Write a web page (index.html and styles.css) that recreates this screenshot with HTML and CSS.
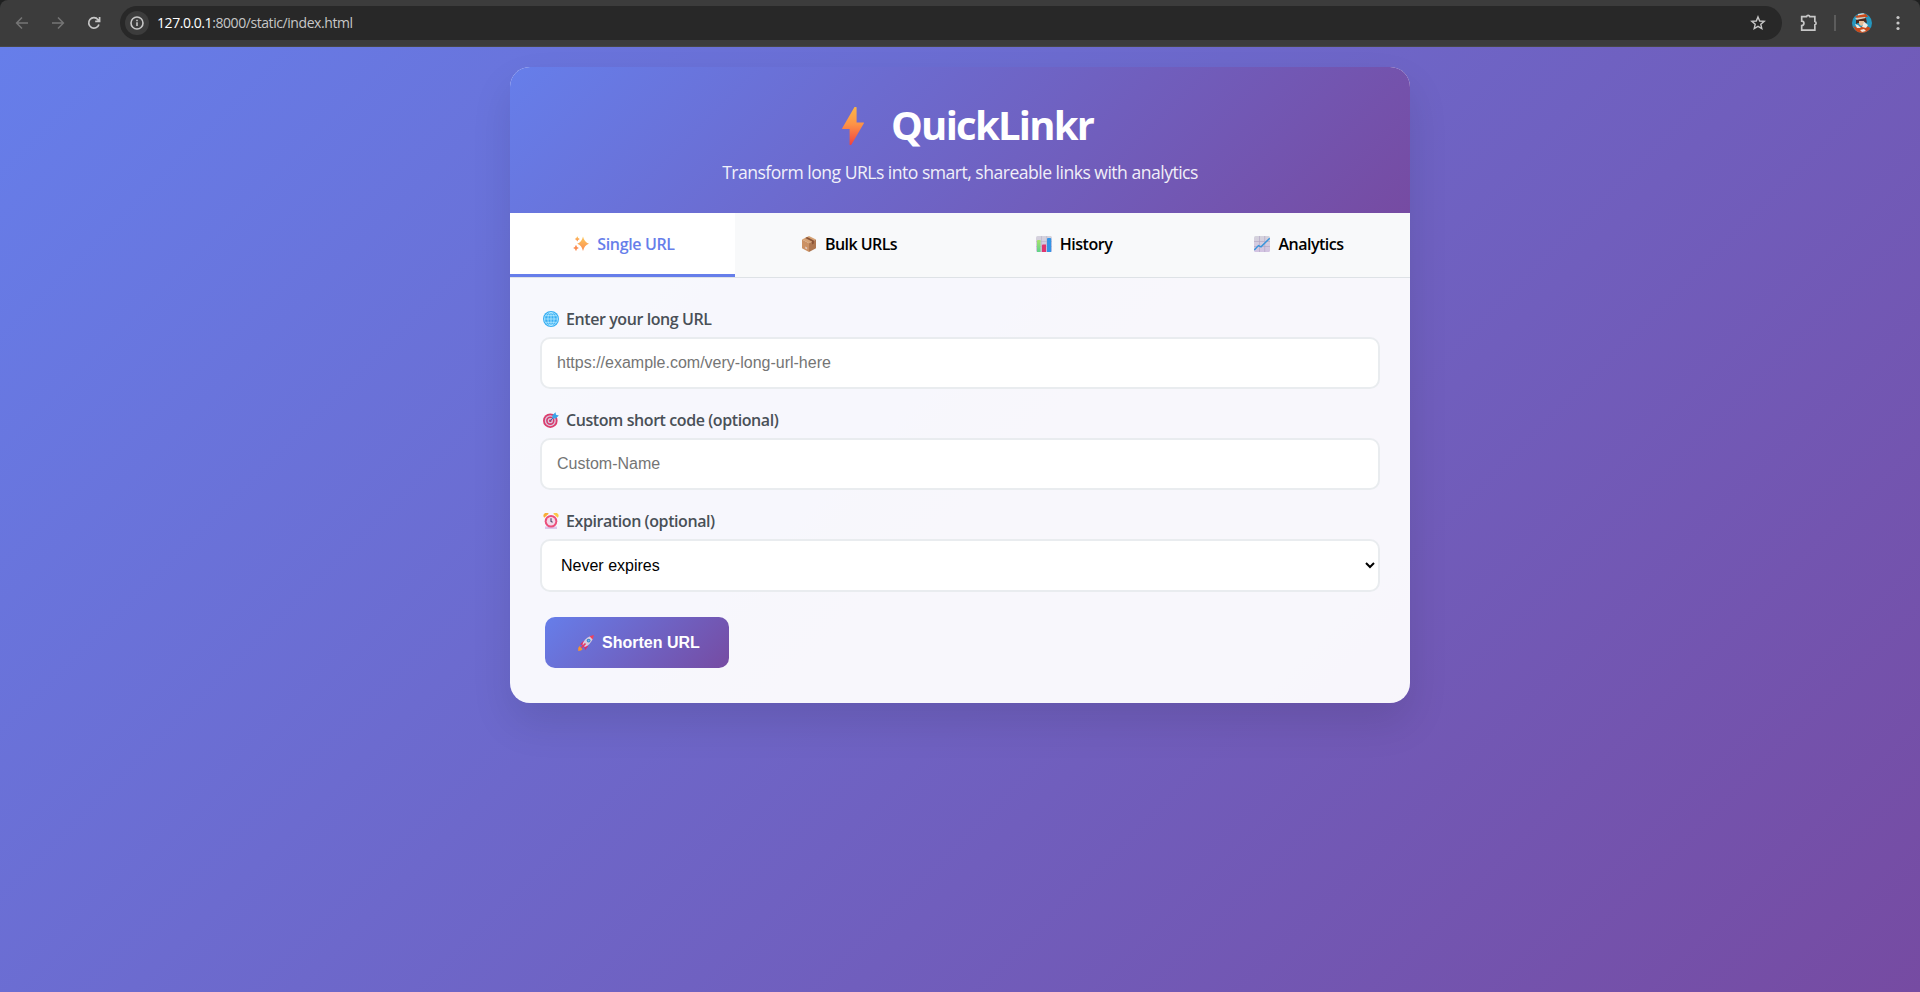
FILE: index.html
```html
<!DOCTYPE html>
<html lang="en">
<head>
<meta charset="utf-8">
<title>QuickLinkr</title>
<link rel="stylesheet" href="styles.css">
</head>
<body>
<svg width="0" height="0" class="defs" aria-hidden="true">
  <defs>
    <linearGradient id="bolt" x1="0" y1="0" x2="0" y2="1"><stop offset="0" stop-color="#fbb547"/><stop offset=".45" stop-color="#fd9347"/><stop offset="1" stop-color="#f1423f"/></linearGradient>
    <linearGradient id="spark" x1="0" y1="0" x2="0" y2="1"><stop offset="0" stop-color="#fcc95c"/><stop offset="1" stop-color="#fb8d52"/></linearGradient>
    <linearGradient id="green" x1="0" y1="0" x2="0" y2="1"><stop offset="0" stop-color="#a7e36b"/><stop offset="1" stop-color="#5fd389"/></linearGradient>
    <linearGradient id="pane" x1="0" y1="0" x2="0" y2="1"><stop offset="0" stop-color="#d5d3dc"/><stop offset="1" stop-color="#d3c3e2"/></linearGradient>
  </defs>
</svg>
<header class="browser">
  <div class="toolbar">
    <svg class="nav dim" viewBox="0 0 16 16"><path d="M14 8H3M8 2.5 2.6 8 8 13.5"/></svg>
    <svg class="nav dim" viewBox="0 0 16 16"><path d="M2 8h11M8 2.5 13.4 8 8 13.5"/></svg>
    <svg class="nav" viewBox="0 0 16 16"><path d="M12.9 9.4A5.2 5.2 0 1 1 12 4.7L13.6 6.3M13.6 2v4.4H9.2"/></svg>
    <div class="address">
      <span class="info"><svg viewBox="0 0 16 16"><circle cx="8" cy="8" r="6"/><path d="M8 7.3v3.8M8 4.7v1.5"/></svg></span>
      <span class="url"><b>127.0.0.1</b>:8000/static/index.html</span>
      <svg class="star" viewBox="0 0 16 16"><path d="m8 1.9 1.7 4.1 4.5.4-3.4 2.9 1 4.3L8 11.300l-3.800 2.300 1-4.300L1.800 6.400l4.500-.4z"/></svg>
    </div>
    <svg class="ext" viewBox="1 1 16 16"><path d="M2.500 3.300h4.300a1.500 1.500 0 0 1 2.900 0h4.500v4.400a1.500 1.500 0 0 1 0 2.900v4.700H2.500v-4a2 2 0 0 0 0-4z"/></svg>
    <span class="divider"></span>
    <svg class="avatar" viewBox="0 0 20 20"><clipPath id="round"><circle cx="10" cy="10" r="10"/></clipPath><g clip-path="url(#round)"><path fill="#2597bf" d="M0 0h20v20H0z"/><path fill="#e3dad0" d="M6 1 12 0l1 2-7 1z"/><path fill="#c94a1b" d="M3 3 14 1l2 3-11 1z"/><path fill="#d9cfc2" d="M3 5 13 4l1 2-9 1z"/><path fill="#4b2a1f" d="m4 7 10-2 1 5-3-1-6 1-2 1z"/><path fill="#e5bd97" d="m7 8 5 0 1 3-4 2-2-2z"/><path fill="#c94a1b" d="M1 13l5 2 6-2 5 1 2 2-5 4H5z"/><path fill="#f1e8df" d="m3 11 3 1 3 3-4 0zM12 9l4 3-2 3-4-1zM8 17l4-1 2 2-4 1z"/></g></svg>
    <svg class="more" viewBox="0 0 4 16"><circle cx="2" cy="2.500" r="1.600"/><circle cx="2" cy="8" r="1.600"/><circle cx="2" cy="13.500" r="1.600"/></svg>
  </div>
</header>
<main class="page">
  <section class="card">
    <div class="hero">
      <h1><svg class="bolt" viewBox="0 0 22 38"><path fill="url(#bolt)" d="M12.500 0H14a.6.6 0 0 1 .6.600V15.500h6.900a.5.5 0 0 1 .4.800L9.500 37.500a.8.800 0 0 1-.7.500H7.600V22H.7a.5.500 0 0 1-.5-.8z"/></svg><span>QuickLinkr</span></h1>
      <p>Transform long URLs into smart, shareable links with analytics</p>
    </div>
    <nav class="tabs">
      <button class="tab active"><svg class="emoji" viewBox="0 0 16 16"><g fill="url(#spark)"><path d="M10 .4q1.300 5.800 6 7.300-4.700 1.500-6 7.200-1.300-5.700-5.800-7.200Q8.700 6.200 10 .4z"/><path d="M4.300.2Q4.800 2.500 6.800 3 4.800 3.500 4.300 5.600 3.700 3.500 1.800 3 3.700 2.500 4.300.2z"/><path fill="#fb8d52" d="M3 8.800q.5 2.600 2.900 3.200Q3.500 12.600 3 15.200 2.400 12.600.1 12 2.400 11.400 3 8.800z"/></g></svg><span class="t1">Single URL</span></button>
      <button class="tab"><svg class="emoji" viewBox="0 0 16 16"><path fill="#d6a274" d="M8 0l7 3.400-7 3.800L1 3.400z"/><path fill="#cb9163" d="M1 3.400l7 3.800V16l-7-3.700z"/><path fill="#ad7650" d="M15 3.400 8 7.200V16l7-3.700z"/><path fill="#8a5437" d="m4.200 1.900 1.900-1 6.800 3.600v3L11 8.500V5.600z"/><path fill="#e0c7bb" d="m4.200 10.500 2 1v2l-2-1z"/></svg><span class="t2">Bulk URLs</span></button>
      <button class="tab"><svg class="emoji" viewBox="0 0 16 16"><rect width="16" height="16" rx="1.500" fill="url(#pane)"/><path d="M0 5.500h16M0 10.500h16M5.500 0v16M10.700 0v16" stroke="#b9b3c9" stroke-width=".6"/><path fill="url(#green)" d="M1 5a1 1 0 0 1 1-1h2.500v12H1z"/><path fill="#df3670" d="M6 9.500a1 1 0 0 1 1-1h3V16H6z"/><path fill="#3494e6" d="M11 3a1 1 0 0 1 1-1h2.200a1 1 0 0 1 1 1v13H11z"/></svg><span class="t3">History</span></button>
      <button class="tab"><svg class="emoji" viewBox="0 0 16 16"><rect width="16" height="16" rx="1.500" fill="url(#pane)"/><path d="M0 5.500h16M0 10.500h16M5.500 0v16M10.700 0v16" stroke="#b5a9c6" stroke-width=".7"/><path fill="none" stroke="#3895dc" stroke-width="1.400" d="m.3 14 4.200-4.400 2.500 1.200L15.700 2.200"/></svg><span class="t4">Analytics</span></button>
    </nav>
    <form class="form">
      <div class="group">
        <label for="long"><svg class="emoji" viewBox="0 0 16 16"><circle cx="8" cy="8" r="8" fill="#38aef2"/><g fill="none" stroke="#b5eaff" stroke-width=".8"><circle cx="8" cy="8" r="6.500"/><ellipse cx="8" cy="8" rx="3.100" ry="6.500"/><path d="M8 1.500v13M1.500 8h13M2.500 4.700h11M2.500 11.300h11"/></g></svg><span>Enter your long URL</span></label>
        <input id="long" type="text" placeholder="https://example.com/very-long-url-here">
      </div>
      <div class="group">
        <label for="code"><svg class="emoji" viewBox="0 0 16 16"><circle cx="7.300" cy="8.700" r="7.300" fill="#dc3d6d"/><circle cx="7.300" cy="8.700" r="5.500" fill="#d9c8de"/><circle cx="7.300" cy="8.700" r="4.200" fill="#d8396d"/><circle cx="7.300" cy="8.700" r="2.600" fill="#d9c8de"/><circle cx="7.300" cy="8.700" r="1.300" fill="#c63065"/><path stroke="#3b6ea8" d="m7.500 8.500 4-4"/><path fill="#3aa4e8" d="m9.500 6.600-.3-3L12.500.2l.5 2.600 2.900.6L12.600 6.600z"/></svg><span>Custom short code (optional)</span></label>
        <input id="code" type="text" placeholder="Custom-Name">
      </div>
      <div class="group">
        <label for="exp"><svg class="emoji" viewBox="0 0 16 16"><path fill="#ddc5ea" d="M2 13.500h12v2.400H2z"/><path fill="#f8ad37" d="M1.300 4.700A2.700 2.700 0 0 1 5.700.7z"/><path fill="#fbc747" d="M14.700 4.700A2.700 2.700 0 0 0 10.300.7z"/><circle cx="8" cy="8.200" r="6.300" fill="#ec4e7b"/><circle cx="8" cy="8.200" r="4.300" fill="#f1d9ea"/><path fill="none" stroke="#4c3f67" stroke-width="1.100" d="M8 5.200v3.300l1.600.8"/></svg><span>Expiration (optional)</span></label>
        <select id="exp"><option>Never expires</option></select>
      </div>
      <button type="button" class="submit"><svg class="emoji" viewBox="0 0 16 16"><path fill="#f59131" d="M1.500 11 4.500 14.300 3 15.600.2 15.900V13z"/><path fill="#dd2f68" d="M2 9.200 5.500 6l2.700.5L10 8l.2 3-3 4.200-1-3.200L4 10z"/><path fill="#d6cbe0" d="M4.500 9.500Q6 3.600 12.600 1l2.400 2.400Q12.500 9.500 6.800 12z"/><path fill="#f0405c" d="m11.500 1.300 4.400-1.200-1.200 4.400z"/><circle cx="10.600" cy="5.600" r="1.900" fill="#3a87c8"/><circle cx="10.600" cy="5.600" r=".9" fill="#69baf0"/><path stroke="#e83963" stroke-width="1.700" d="m3.500 12.700 4-4.200"/></svg><span>Shorten URL</span></button>
    </form>
  </section>
</main>
</body>
</html>
```
FILE: styles.css
```css
* { box-sizing: border-box; }
body {
  margin: 0;
  height: 992px;
  display: flex;
  flex-direction: column;
  overflow: hidden;
  font-family: "Open Sans", "Noto Sans", sans-serif;
}
.defs { position: absolute; }
.browser { height: 47px; background: #1f2020; flex: none; }
.toolbar {
  height: 47px;
  display: flex;
  align-items: center;
  padding: 0 20px 1px 14px;
  background: #3c3c3c;
  border-bottom: 1px solid #474747;
  border-radius: 8px 8px 0 0;
}
.nav {
  width: 16px; height: 16px; margin-right: 20px;
  fill: none; stroke: #c7c7c7; stroke-width: 1.7;
}
.nav.dim { stroke: #757575; stroke-width: 1.5; }
.address {
  width: 1662px; height: 34px;
  margin-left: -2px;
  padding: 0 16px 0 5px;
  display: flex;
  align-items: center;
  border-radius: 17px;
  background: #282828;
}
.info {
  width: 24px; height: 24px;
  display: flex; align-items: center; justify-content: center;
  border-radius: 50%;
  background: #3c3c3c;
}
.info svg { width: 16px; height: 16px; fill: none; stroke: #c7c7c7; stroke-width: 1.6; }
.url { margin-left: 8px; font-size: 14px; letter-spacing: -.43px; color: #c7c7c7; }
.url b { font-weight: 400; color: #fff; }
.star { width: 16px; height: 16px; margin-left: auto; fill: none; stroke: #c7c7c7; stroke-width: 1.4; }
.ext { width: 18px; height: 18px; margin-left: 18px; fill: none; stroke: #c7c7c7; stroke-width: 1.5; }
.divider { width: 2px; height: 16px; margin-left: 16px; background: #5c5c5c; }
.avatar { width: 20px; height: 20px; margin-left: 16px; }
.more { width: 4px; height: 16px; margin-left: auto; fill: #c7c7c7; }

.page {
  flex: 1;
  padding: 20px;
  background: linear-gradient(135deg, #667eea 0%, #764ba2 100%);
}
.card {
  width: 900px; height: 636px;
  margin: 0 auto;
  border-radius: 20px;
  overflow: hidden;
  background: rgba(255, 255, 255, .95);
  box-shadow: 0 20px 40px rgba(0, 0, 0, .1);
}
.hero {
  height: 146px;
  padding: 29px 0;
  text-align: center;
  color: #fff;
  background: linear-gradient(135deg, #667eea 0%, #764ba2 100%);
}
h1 {
  margin: 0;
  height: 57px;
  display: flex; align-items: center;
  padding-left: 332px;
  font-size: 40px; line-height: 57px;
  letter-spacing: -1.75px;
}
.bolt { width: 22px; height: 38px; margin: 2px 27px 0 0; }
.hero p {
  margin: 7px 0 0;
  height: 24px; line-height: 24px;
  font-size: 17.6px; letter-spacing: -.52px;
  opacity: .9;
  white-space: nowrap;
}
.tabs {
  height: 65px;
  display: flex;
  background: #f8f9fa;
  border-bottom: 1px solid #dee2e6;
}
.tab {
  flex: 1;
  display: flex; align-items: center; justify-content: center;
  gap: 8px;
  padding: 0 0 0 3px;
  border: 0;
  border-bottom: 3px solid transparent;
  background: none;
  font: 600 16px "Open Sans", "Noto Sans", sans-serif;
  color: #000;
}
.tab.active { background: #fff; color: #667eea; border-bottom-color: #667eea; }
.t1 { letter-spacing: -.36px; }
.t2 { letter-spacing: -.55px; }
.t3 { letter-spacing: -.45px; }
.t4 { letter-spacing: -.5px; }
.emoji { width: 16px; height: 16px; flex: none; }
.form { padding: 30px; }
.group { margin-bottom: 20px; }
label {
  height: 21px;
  margin-bottom: 8px;
  padding: 1px 0 0 3px;
  display: flex; align-items: center;
  gap: 7px;
  font-size: 16px; font-weight: 600; line-height: 20px;
  letter-spacing: -.42px;
  color: #495057;
}
input, select {
  display: block;
  width: 100%; height: 52px;
  padding: 0 15px;
  border: 2px solid #e9ecef;
  border-radius: 10px;
  background: #fff;
  color: #000;
  font: 16px "Liberation Sans", sans-serif;
}
select { height: 53px; }
.submit {
  width: 184px; height: 51px;
  margin: 25px 5px 5px;
  display: flex; align-items: center;
  gap: 8px;
  padding: 1px 0 0 33px;
  border: 0;
  border-radius: 10px;
  background: linear-gradient(135deg, #667eea 0%, #764ba2 100%);
  color: #fff;
  font: 700 16px "Liberation Sans", sans-serif;
  white-space: nowrap;
}
```
